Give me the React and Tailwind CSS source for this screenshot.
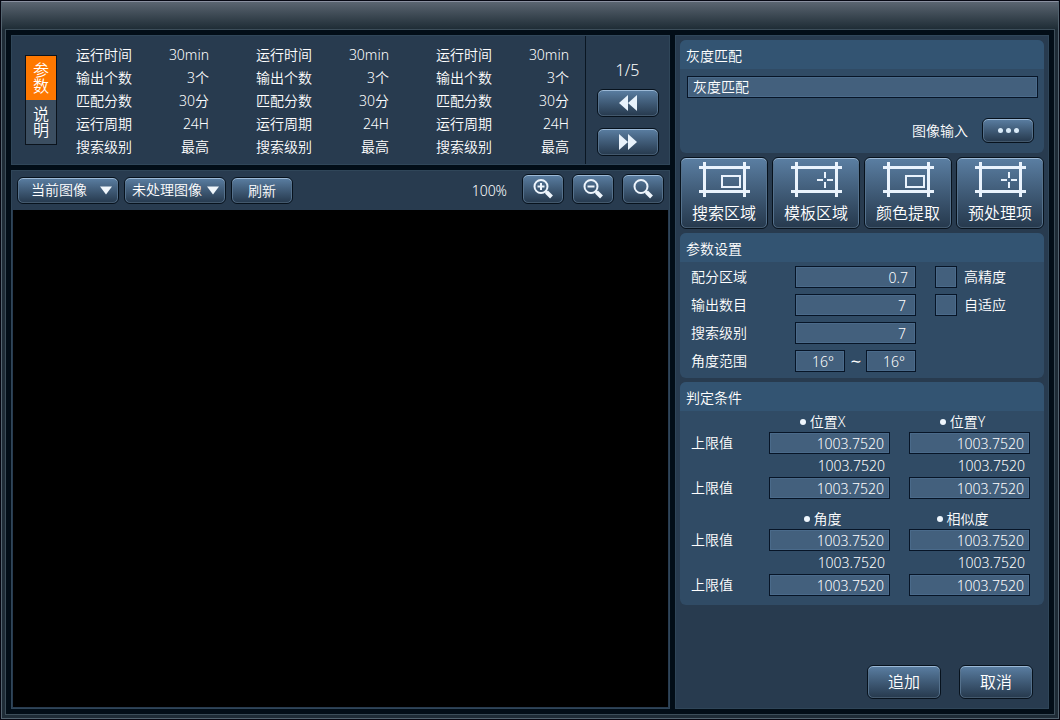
import React from 'react';

const stats = [
  ['运行时间', '30min'],
  ['输出个数', '3个'],
  ['匹配分数', '30分'],
  ['运行周期', '24H'],
  ['搜索级别', '最高'],
];

const glossy =
  'border border-[#07121d] bg-gradient-to-b from-[#5b7fa3] to-[#26394d] shadow-[inset_0_1px_0_#9cb9d6,inset_1px_0_0_#55718c,inset_-1px_0_0_#55718c,inset_0_-1px_0_#43586c] text-white active:brightness-90';
const field =
  'h-[22px] border border-[#071527] bg-[#43607d] shadow-[inset_0_0_0_1px_#4a6a8a] text-white outline-none focus:border-[#8fb2d4]';

function Button({ className = '', children, ...rest }) {
  return (
    <button type="button" className={`flex items-center justify-center rounded-md ${glossy} ${className}`} {...rest}>
      {children}
    </button>
  );
}

function Dropdown({ label, options, className }) {
  return (
    <div className="relative">
      <select
        aria-label={label}
        className={`h-[27px] w-[102px] appearance-none rounded-md pb-px outline-none ${glossy} ${className}`}
      >
        {options.map((o) => (
          <option key={o} className="bg-[#293c50]">{o}</option>
        ))}
      </select>
      <svg className="pointer-events-none absolute top-[9px] right-[7px]" width="12" height="9" viewBox="0 0 12 9" aria-hidden="true">
        <path d="M0 0.5h12L6 8.5z" fill="#f0f6fb" />
      </svg>
    </div>
  );
}

function Rewind({ flip }) {
  return (
    <svg width="18" height="16" viewBox="0 0 18 16" fill="#e8f2fb" aria-hidden="true">
      {flip ? <path d="M0 0l9 8-9 8zM9 0l9 8-9 8z" /> : <path d="M18 0l-9 8 9 8zM9 0L0 8l9 8z" />}
    </svg>
  );
}

function Magnifier({ sign }) {
  return (
    <svg width="20" height="20" viewBox="0 0 20 20" fill="none" stroke="#eef5fc" aria-hidden="true">
      <circle cx="8" cy="7.5" r="6.5" strokeWidth="2" />
      <path d="M12.5 12l1.5 1.5" strokeWidth="2.5" />
      <path d="M13.5 13l5 5" strokeWidth="4" />
      {sign && <path d="M4.5 7.5h7" strokeWidth="2" />}
      {sign === 'plus' && <path d="M8 4v7" strokeWidth="2" />}
    </svg>
  );
}

function RegionIcon({ kind }) {
  return (
    <svg width="52" height="36" viewBox="0 0 52 36" fill="none" stroke="#eaf3fd" aria-hidden="true">
      <path d="M1 6.5h51M1 30.5h51M6.5 1v35M46.5 1v35" strokeWidth="3" />
      {kind === 'box' ? (
        <rect x="24" y="15" width="18" height="11" strokeWidth="2" />
      ) : (
        <path d="M27 19h6M37 19h6M35 11v6M35 21v6" strokeWidth="2" />
      )}
    </svg>
  );
}

function Section({ title, children }) {
  return (
    <section className="overflow-hidden rounded-md bg-[#304b65]">
      <h2 className="h-[29px] bg-[#335472] pt-0.5 pl-1.5 leading-7">{title}</h2>
      {children}
    </section>
  );
}

function ParamRow({ id, label, children }) {
  return (
    <div className="flex h-[22px] items-center">
      <label htmlFor={id} className="w-[104px]">{label}</label>
      {children}
    </div>
  );
}

function Check({ label }) {
  return (
    <label className="ml-[19px] flex items-center gap-[7px]">
      <input type="checkbox" className={`w-[22px] appearance-none checked:bg-[#7fa6cc] ${field}`} />
      {label}
    </label>
  );
}

function Judgement({ names }) {
  return (
    <div className="grid grid-cols-[59px_121px_121px] justify-between pr-3.5 pl-[11px]">
      <span />
      {names.map((n) => (
        <div key={n} className="flex h-[21px] items-center justify-center gap-1 pr-3.5">
          <span className="size-1.5 rounded-full bg-[#eef6fd]" />
          {n}
        </div>
      ))}
      <span className="leading-[22px]">上限值</span>
      {names.map((n) => (
        <input key={n} aria-label={`${n} 上限值 1`} defaultValue="1003.7520" className={`w-full pr-[5px] text-right ${field}`} />
      ))}
      <span />
      {names.map((n) => (
        <span key={n} className="pr-[5px] text-right leading-[23px]">1003.7520</span>
      ))}
      <span className="leading-[22px]">上限值</span>
      {names.map((n) => (
        <input key={n} aria-label={`${n} 上限值 2`} defaultValue="1003.7520" className={`w-full pr-[5px] text-right ${field}`} />
      ))}
    </div>
  );
}

export default function App() {
  return (
    <div className="flex min-h-screen flex-col bg-[#060712] p-px font-['Noto_Sans','Noto_Sans_CJK_SC',sans-serif] text-sm font-[350] text-white">
      <div className="flex grow flex-col border border-[#53636f] border-t-[#8a90a0] bg-[#1e2b36]">
        <header className="h-[27px] bg-gradient-to-b from-[#5b6571] to-[#1f2d36]" />
        <main className="mx-[3px] mb-[3px] flex grow gap-[5px] border border-[#3c4d59] bg-[#020d17] p-[5px]">
          <div className="flex min-w-0 grow flex-col gap-[5px]">
            <section className="flex h-[130px] border border-[#304659] bg-[#283b4f]">
              <div className="flex min-w-0 grow items-center pl-[13px]">
                <div role="tablist" className="flex h-[90px] w-8 shrink-0 flex-col border border-[#0b131c] text-base leading-4">
                  <button type="button" role="tab" aria-selected="true" className="flex flex-1 items-center justify-center bg-[#ff7800] px-1.5">
                    <span className="w-4">参数</span>
                  </button>
                  <button type="button" role="tab" aria-selected="false" className="flex flex-1 items-center justify-center bg-[#3b4e61] px-1.5">
                    <span className="w-4">说明</span>
                  </button>
                </div>
                <table className="mt-0.5 ml-[19px]">
                  <tbody>
                    {stats.map(([name, value]) => (
                      <tr key={name} className="h-[23px]">
                        {[0, 1, 2].map((c) => (
                          <React.Fragment key={c}>
                            <th scope="row" className="w-20 p-0 text-left font-[350]">{name}</th>
                            <td className={c < 2 ? 'w-[100px] p-0 pr-[47px] text-right' : 'w-[53px] p-0 text-right'}>{value}</td>
                          </React.Fragment>
                        ))}
                      </tr>
                    ))}
                  </tbody>
                </table>
              </div>
              <div className="flex w-[84px] flex-col items-center gap-2 border-l border-[#0a1622] pt-[23px]">
                <span className="text-base leading-[22px]">1/5</span>
                <div className="flex flex-col gap-[11px]">
                  <Button aria-label="上一页" className="h-7 w-[62px]"><Rewind /></Button>
                  <Button aria-label="下一页" className="h-7 w-[62px]"><Rewind flip /></Button>
                </div>
              </div>
            </section>

            <section className="flex grow flex-col border border-[#304659] bg-[#283b4f]">
              <div className="flex h-[39px] items-center gap-[5px] px-[5px]">
                <Dropdown label="图像选择" options={['当前图像', '历史图像']} className="pl-[13px]" />
                <Dropdown label="处理选择" options={['未处理图像', '已处理图像']} className="pl-[7px]" />
                <Button className="h-[27px] w-[62px]">刷新</Button>
                <span className="ml-auto pr-2.5">100%</span>
                <div className="flex gap-2 pb-[3px]">
                  <Button aria-label="放大" className="h-[30px] w-[42px]"><Magnifier sign="plus" /></Button>
                  <Button aria-label="缩小" className="h-[30px] w-[42px]"><Magnifier sign="minus" /></Button>
                  <Button aria-label="查看" className="h-[30px] w-[42px]"><Magnifier /></Button>
                </div>
              </div>
              <div className="mx-px mb-px grow bg-black" />
            </section>
          </div>

          <aside className="flex w-[374px] shrink-0 flex-col gap-1 border border-[#304659] bg-[#283b4f] p-1">
            <Section title="灰度匹配">
              <div className="flex flex-col pt-[7px] pr-1.5 pb-2.5 pl-[7px]">
                <input aria-label="灰度匹配" defaultValue="灰度匹配" className={`w-full pb-0.5 pl-[5px] ${field}`} />
                <div className="flex items-center justify-end gap-3.5 pt-5 pr-1">
                  <span id="image-input">图像输入</span>
                  <Button aria-labelledby="image-input" className="h-[25px] w-[52px] gap-[3px]">
                    <span className="size-[5px] rounded-full bg-[#d9eaf8]" />
                    <span className="size-[5px] rounded-full bg-[#d9eaf8]" />
                    <span className="size-[5px] rounded-full bg-[#d9eaf8]" />
                  </Button>
                </div>
              </div>
            </Section>

            <div className="grid grid-cols-4 gap-1">
              {[['搜索区域', 'box'], ['模板区域', 'cross'], ['颜色提取', 'box'], ['预处理项', 'cross']].map(([name, kind]) => (
                <Button key={name} className="h-[72px] flex-col gap-1 text-base leading-6">
                  <RegionIcon kind={kind} />
                  {name}
                </Button>
              ))}
            </div>

            <Section title="参数设置">
              <div className="flex flex-col gap-1.5 pt-1 pb-[6px] pl-[11px]">
                <ParamRow id="area" label="配分区域">
                  <input id="area" defaultValue="0.7" className={`w-[121px] pr-[7px] text-right ${field}`} />
                  <Check label="高精度" />
                </ParamRow>
                <ParamRow id="count" label="输出数目">
                  <input id="count" defaultValue="7" className={`w-[121px] pr-[9px] text-right ${field}`} />
                  <Check label="自适应" />
                </ParamRow>
                <ParamRow id="level" label="搜索级别">
                  <input id="level" defaultValue="7" className={`w-[121px] pr-[9px] text-right ${field}`} />
                </ParamRow>
                <ParamRow id="angle" label="角度范围">
                  <input id="angle" defaultValue="16°" className={`w-[50px] pr-2.5 text-right ${field}`} />
                  <span className="w-[21px] text-center">∼</span>
                  <input aria-label="角度上限" defaultValue="16°" className={`w-[50px] pr-2.5 text-right ${field}`} />
                </ParamRow>
              </div>
            </Section>

            <Section title="判定条件">
              <div className="flex flex-col gap-[9px] pb-[9px]">
                <Judgement names={['位置X', '位置Y']} />
                <Judgement names={['角度', '相似度']} />
              </div>
            </Section>

            <div className="mt-auto flex justify-end gap-[18px] pr-[11px] pb-[5px] text-base">
              <Button className="h-[34px] w-[74px]">追加</Button>
              <Button className="h-[34px] w-[74px]">取消</Button>
            </div>
          </aside>
        </main>
      </div>
    </div>
  );
}
